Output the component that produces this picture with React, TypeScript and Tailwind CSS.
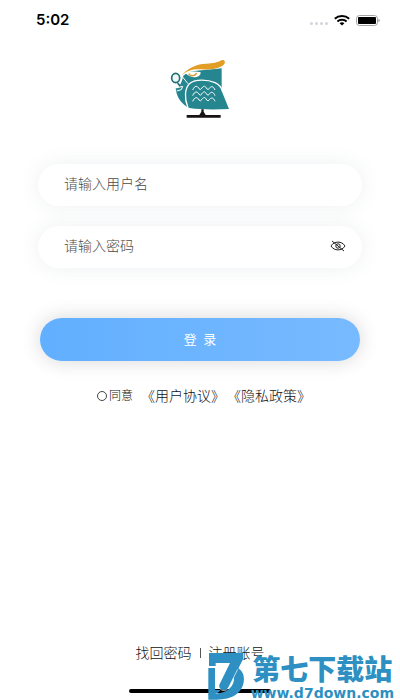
import { useState } from "react";

function StatusBar() {
  return (
    <div className="flex h-10 items-center justify-between pr-5 pl-9">
      <span className="font-[Inter,sans-serif] text-[15px] font-semibold text-black">5:02</span>
      <div className="flex items-center gap-1.5">
        <div className="flex gap-0.5 pt-1.5">
          <i className="size-[3px] rounded-full bg-gray-300" />
          <i className="size-[3px] rounded-full bg-gray-300" />
          <i className="size-[3px] rounded-full bg-gray-300" />
          <i className="size-[3px] rounded-full bg-gray-300" />
        </div>
        <svg className="h-[11px] w-4" viewBox="0 0 16 11" fill="none" stroke="#000" strokeWidth="2">
          <path d="M0.8 3.8C4.8 0.2 11.2 0.2 15.2 3.8" />
          <path d="M3.4 6.5C6 4.2 10 4.2 12.6 6.5" />
          <path d="M5.6 8.2C7 7 9 7 10.4 8.2L8 10.6Z" fill="#000" stroke="none" />
        </svg>
        <svg className="h-[11px] w-6" viewBox="0 0 24 11">
          <rect x="0.5" y="0.5" width="21" height="10" rx="3" fill="none" stroke="#a3a3a3" />
          <rect x="2" y="2" width="18" height="7" rx="1" />
          <path d="M22.600 4v3c1.200-.5 1.200-2.500 0-3z" fill="#555" />
        </svg>
      </div>
    </div>
  );
}

function OwlLogo() {
  return (
    <svg className="mx-auto h-[60px] w-[60px]" viewBox="0 0 180 180" fill="none">
      <path d="M40 50C62 30 104 36 155 28V96L177 150C136 152 92 152 58 147C38 138 20 119 17 88C28 88 35 70 40 50Z" fill="#25868f" />
      <path d="M54 146C42 118 44 87 60 73C76 60 112 61 135 71C150 78 155 86 158 98" stroke="#fff" strokeWidth="4" />
      <path d="M36 52L54 74" stroke="#fff" strokeWidth="3" />
      <path d="M46 43C60 36 80 37 92 40C92 50 84 55 72 55C62 54 54 49 46 43Z" fill="#fff" />
      <path d="M56 44C60 52 76 52 80 42" stroke="#d99a2b" strokeWidth="4" />
      <path d="M33 51C50 31 76 14 108 14C132 13 144 10 156 3C163 1 169 9 161 17C148 29 119 33 87 31C65 31 50 36 33 51Z" fill="#e29d24" />
      <ellipse cx="17" cy="57" rx="16" ry="18" fill="#fff" />
      <ellipse cx="17" cy="57" rx="12" ry="14" fill="#eef7f8" stroke="#236d75" strokeWidth="5" />
      <path d="M23 72L30 81" stroke="#236d75" strokeWidth="5" />
      <path d="M15 80L22 86L38 82L34 92L20 96" stroke="#fff" strokeWidth="3" />
      <g stroke="#fff" strokeWidth="3">
        <path d="M68 93C74 79 82 79 87 89Q91 95 96 87C101 79 106 80 110 89Q114 95 119 87C126 79 131 84 135 93" />
        <path d="M68 110C74 96 82 96 87 106Q91 112 96 104C101 96 106 97 110 106Q114 112 119 104C126 96 131 101 135 110" />
        <path d="M68 127C74 113 82 113 87 123Q91 129 96 121C101 113 106 114 110 123Q114 129 119 121C126 113 131 118 135 127" />
      </g>
      <path d="M94 151H101V158L107 168H152V176H50V168H88L94 158Z" fill="#171314" />
    </svg>
  );
}

function EyeOff() {
  return (
    <svg className="h-3 w-4" viewBox="0 0 16 12" fill="none" stroke="#222" strokeWidth="1">
      <path d="M1 6C4 .8 12 .8 15 6C12 11.200 4 11.200 1 6Z" />
      <circle cx="8" cy="6" r="2.200" />
      <path d="M2 1L14 11" />
    </svg>
  );
}

function Watermark() {
  return (
    <div className="pointer-events-none absolute right-1.5 bottom-0 flex h-12 items-start gap-1.5 text-[#2d8fc2]">
      <svg className="h-12 w-[38px]" viewBox="0 0 114 144" fill="currentColor">
        <path d="M4 48H24V114H40C34 124 20 128 4 130Z" />
        <path d="M88 46C122 58 118 116 76 134C52 144 25 143 4 143V126C40 126 62 120 74 102C84 86 82 74 74 68Z" />
        <path d="M6 3H108V22L64 108C57 119 33 114 37 98L69 33H26V42H6Z" />
        <path d="M92 52L64 108C58 118 46 117 40 112" fill="none" stroke="#fff" strokeWidth="2" />
      </svg>
      <div className="flex flex-col items-center">
        <span className="font-['Noto_Sans_CJK_SC',sans-serif] text-[28px] leading-8 font-black">第七下载站</span>
        <span className="font-['DejaVu_Sans',sans-serif] text-sm leading-[18px] font-bold">www.d7down.com</span>
      </div>
    </div>
  );
}

const fieldClass =
  "flex h-[42px] items-center rounded-full bg-white pr-4 pb-0.5 pl-[26px] shadow-[0_0_20px_rgba(70,90,110,0.09)]";
const inputClass = "min-w-0 flex-1 bg-transparent text-sm outline-none placeholder:text-[#4a4a4a]";

export default function App() {
  const [visible, setVisible] = useState(false);

  return (
    <main className="relative flex min-h-screen flex-col overflow-hidden bg-white font-['Liberation_Sans','Noto_Sans_CJK_SC',sans-serif] font-light text-[#111]">
      <StatusBar />
      <div className="pt-[19px]">
        <OwlLogo />
      </div>
      <form className="mt-[45px] px-[38px]" onSubmit={(e) => e.preventDefault()}>
        <div className="flex flex-col gap-5">
          <div className={fieldClass}>
            <input className={inputClass} type="text" aria-label="用户名" placeholder="请输入用户名" />
          </div>
          <div className={fieldClass}>
            <input
              className={inputClass}
              type={visible ? "text" : "password"}
              aria-label="密码"
              placeholder="请输入密码"
            />
            <button type="button" aria-label="显示密码" onClick={() => setVisible(!visible)}>
              <EyeOff />
            </button>
          </div>
        </div>
        <div className="mt-[50px] px-0.5">
          <button
            type="submit"
            className="h-[43px] w-full rounded-full bg-linear-to-r from-[#61afff] to-[#78baff] text-[13px] font-normal text-white shadow-[0_0_20px_rgba(0,0,0,0.16)]"
          >
            登&ensp;录
          </button>
        </div>
        <div className="mt-[25px] flex items-center justify-center gap-0.5 pl-2 text-sm">
          <label className="mr-1.5 flex items-center gap-0.5 text-xs">
            <input type="checkbox" className="size-2.5 appearance-none rounded-full border border-[#444] checked:bg-[#61afff]" />
            同意
          </label>
          <a href="#agreement">《用户协议》</a>
          <a href="#privacy">《隐私政策》</a>
        </div>
      </form>
      <nav className="mt-auto flex items-center justify-center gap-2 text-sm">
        <a href="#forgot">找回密码</a>
        <span className="h-2.5 w-px bg-[#555]" />
        <a href="#register">注册账号</a>
      </nav>
      <div className="mx-auto mt-[26px] mb-[7px] h-1 w-[142px] rounded-full bg-black" />
      <Watermark />
    </main>
  );
}
